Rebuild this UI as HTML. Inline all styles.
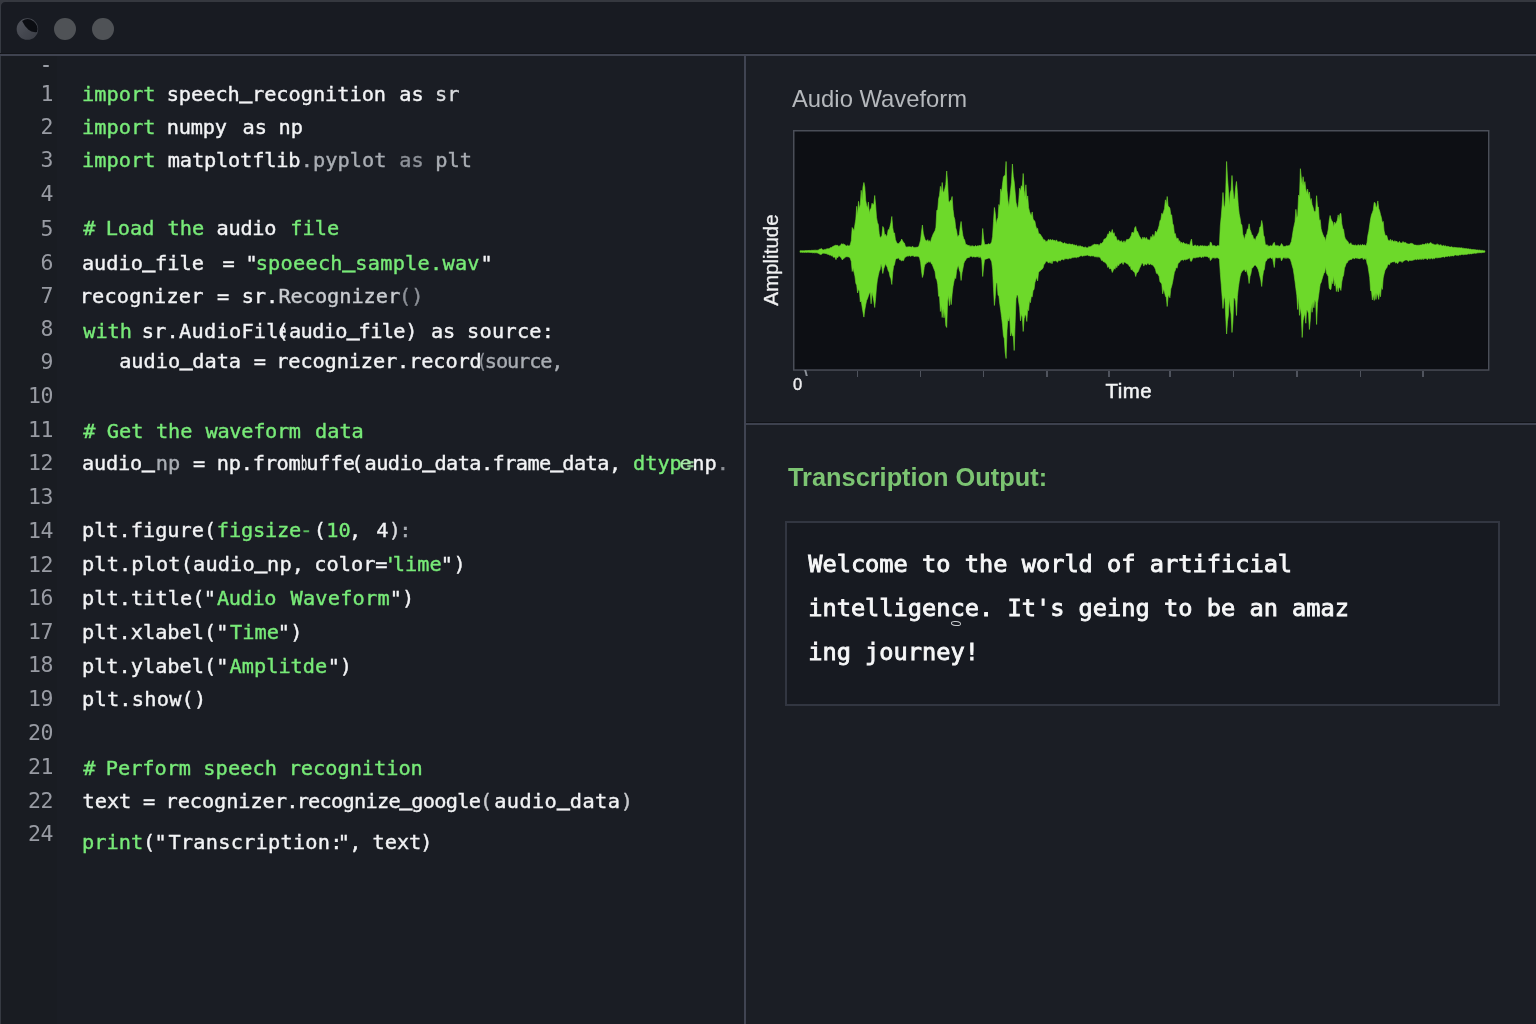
<!DOCTYPE html>
<html lang="en"><head><meta charset="utf-8"><title>Speech Recognition</title>
<style>
html,body{margin:0;padding:0}
body{width:1536px;height:1024px;overflow:hidden;background:#1a1d24;position:relative;font-family:"DejaVu Sans Mono","Liberation Mono",monospace}
.abs{position:absolute}
.row{position:absolute;left:0;width:744px;height:30px;font-size:20.3px;line-height:30px;white-space:pre;color:#f2f3f5;-webkit-text-stroke:0.4px currentColor}
.row span{position:absolute;top:0;transform-origin:0 50%}
.row u{text-decoration:none;position:relative;top:-3.2px;-webkit-text-stroke:1.4px currentColor}
.ln{position:absolute;white-space:pre;font-size:21.5px;line-height:30px;height:30px;color:#989ba3;text-align:right;width:40px;left:12.8px;letter-spacing:-0.6px}
.dot{position:absolute;width:21.8px;height:21.8px;border-radius:50%;background:#4f5256;top:17.8px}
.sans{font-family:"Liberation Sans","DejaVu Sans",sans-serif}
</style></head><body><div id="app" style="position:absolute;left:0;top:0;width:1536px;height:1024px;will-change:transform">

<div class="abs" style="left:0;top:0;width:1536px;height:56px;background:#181b22"></div>
<div class="abs" style="left:746px;top:56px;width:790px;height:968px;background:#1b1e25"></div>
<div class="abs" style="left:1px;top:56px;width:56px;height:968px;background:#191c22"></div>
<div class="abs" style="left:0;top:0;width:1536px;height:2px;background:#35383f"></div>
<div class="abs" style="left:0;top:0;width:1px;height:1024px;background:#363a42"></div>
<svg class="abs" style="left:0;top:0" width="8" height="8" viewBox="0 0 8 8"><path d="M0 0H8V2H5.2A4.2 4.2 0 0 0 1 6.2V8H0Z" fill="#363940"/></svg>
<div class="abs" style="left:0;top:53px;width:1536px;height:1px;background:#13151a"></div>
<div class="abs" style="left:0;top:54px;width:1536px;height:2px;background:#3f4350"></div>
<div class="abs" style="left:744px;top:56px;width:2px;height:968px;background:#404452"></div>
<div class="abs" style="left:746px;top:422px;width:790px;height:1px;background:#111318"></div>
<div class="abs" style="left:746px;top:423px;width:790px;height:2px;background:#3d414e"></div>
<div class="dot" style="left:54.1px"></div>
<div class="dot" style="left:92.19999999999999px"></div>
<svg class="abs" style="left:10px;top:10px" width="40" height="40" viewBox="0 0 40 40"><defs><linearGradient id="g1" x1="0" y1="0" x2="1" y2="1"><stop offset="0.2" stop-color="#4d5058"/><stop offset="0.8" stop-color="#3e4149"/></linearGradient></defs><circle cx="17.4" cy="19.1" r="10.75" fill="url(#g1)"/><path d="M12.1 10.9A9.9 9.9 0 0 1 26.95 22.1Q21.5 22.6 18.5 19.8Q14.5 16 12.1 10.9Z" fill="#0b0d12"/></svg>
<div class="abs" style="left:43px;top:64.8px;width:6px;height:2.2px;background:#9a9ea6;border-radius:1px"></div>
<div class="row" style="top:79px"><span style="left:82.07px;color:#78ea78;letter-spacing:0.013px;">import</span> <span style="left:166.67px;color:#f2f3f5;letter-spacing:-0.023px;">speech<u>_</u>recognition</span> <span style="left:399.18px;color:#f2f3f5;">as</span> <span style="left:435.07px;color:#d9dbde;">sr</span></div>
<div class="row" style="top:112px"><span style="left:82.07px;color:#78ea78;letter-spacing:0.013px;">import</span> <span style="left:166.87px;color:#f2f3f5;letter-spacing:-0.257px;">numpy</span> <span style="left:242.48px;color:#f2f3f5;">as</span> <span style="left:278.57px;color:#f2f3f5;">np</span></div>
<div class="row" style="top:145px"><span style="left:82.07px;color:#78ea78;letter-spacing:0.013px;">import</span> <span style="left:167.79px;color:#f2f3f5;letter-spacing:-0.156px;">matplotflib</span><span style="left:300.73px;color:#a9adb3;letter-spacing:0.032px;">.pyplot</span> <span style="left:399.18px;color:#8d9198;">as</span> <span style="left:435.37px;color:#a9adb3;">plt</span></div>
<div class="row" style="top:213px"><span style="left:83.20px;color:#78ea78;">#</span> <span style="left:105.67px;color:#78ea78;">Load</span> <span style="left:167.48px;color:#78ea78;">the</span> <span style="left:216.48px;color:#f2f3f5;letter-spacing:-0.257px;">audio</span> <span style="left:290.27px;color:#78ea78;">file</span></div>
<div class="row" style="top:248px"><span style="left:81.88px;color:#f2f3f5;letter-spacing:-0.015px;">audio<u>_</u>file</span> <span style="left:222.39px;color:#f2f3f5;">=</span> <span style="left:245.45px;color:#f2f3f5;">"</span><span style="left:255.67px;color:#78ea78;letter-spacing:0.241px;">spoeech<u>_</u>sample.wav</span><span style="left:480.45px;color:#f2f3f5;">"</span></div>
<div class="row" style="top:281px"><span style="left:79.65px;color:#f2f3f5;letter-spacing:0.188px;">recognizer</span> <span style="left:216.99px;color:#f2f3f5;">=</span> <span style="left:241.67px;color:#f2f3f5;">sr.</span><span style="left:278.38px;color:#c9ccd0;letter-spacing:-0.038px;">Recognizer</span><span style="left:399.04px;color:#8d9198;">()</span></div>
<div class="row" style="top:316px"><span style="left:83.20px;color:#78ea78;">with</span> <span style="left:141.67px;color:#f2f3f5;letter-spacing:0.256px;">sr.AudioFil</span><span style="left:279.17px;color:#f2f3f5;transform:scaleX(0.6);">e</span><span style="left:276.54px;color:#f2f3f5;">(</span><span style="left:288.98px;color:#f2f3f5;letter-spacing:-0.615px;">audio<u>_</u>file</span><span style="left:405.35px;color:#f2f3f5;">)</span> <span style="left:430.88px;color:#f2f3f5;">as</span> <span style="left:467.07px;color:#f2f3f5;letter-spacing:0.249px;">source:</span></div>
<div class="row" style="top:346px">   <span style="left:119.18px;color:#f2f3f5;letter-spacing:-0.026px;">audio<u>_</u>data</span> <span style="left:253.69px;color:#f2f3f5;">=</span> <span style="left:276.25px;color:#f2f3f5;letter-spacing:-0.128px;">recognizer.record</span><span style="left:476.67px;color:#8d9198;transform:scaleX(0.8);">(</span><span style="left:484.87px;color:#a9adb3;letter-spacing:-1.135px;">source,</span></div>
<div class="row" style="top:416px"><span style="left:83.20px;color:#78ea78;">#</span> <span style="left:106.78px;color:#78ea78;">Get</span> <span style="left:155.88px;color:#78ea78;">the</span> <span style="left:205.50px;color:#78ea78;letter-spacing:-0.303px;">waveform</span> <span style="left:314.98px;color:#78ea78;">data</span></div>
<div class="row" style="top:448px"><span style="left:81.88px;color:#f2f3f5;letter-spacing:-0.154px;">audio<u>_</u></span><span style="left:155.87px;color:#a9adb3;">np</span> <span style="left:192.99px;color:#f2f3f5;">=</span> <span style="left:216.87px;color:#f2f3f5;letter-spacing:-0.261px;">np.from</span><span style="left:300.54px;color:#f2f3f5;transform:scaleX(0.5);">b</span><span style="left:306.17px;color:#f2f3f5;">uffe</span><span style="left:351.24px;color:#f2f3f5;">(</span><span style="left:364.58px;color:#f2f3f5;letter-spacing:-0.578px;">audio<u>_</u>data.frame<u>_</u>data</span><span style="left:609.04px;color:#f2f3f5;">,</span> <span style="left:632.98px;color:#78ea78;">dtyp</span><span style="left:679.58px;color:#a8eaa8;transform:scaleX(1.0);-webkit-text-stroke:0.2px">e</span><span style="left:686.55px;color:#a8eaa8;transform:scaleX(0.55);opacity:.8">=</span><span style="left:692.37px;color:#f2f3f5;">np</span><span style="left:716.63px;color:#8d9198;">.</span></div>
<div class="row" style="top:515px"><span style="left:81.97px;color:#f2f3f5;letter-spacing:-0.012px;">plt.figure(</span><span style="left:216.87px;color:#78ea78;letter-spacing:-0.177px;">figsize</span><span style="left:300.25px;color:#58b85c;">-</span><span style="left:313.64px;color:#f2f3f5;">(</span><span style="left:326.36px;color:#78ea78;">10</span><span style="left:349.04px;color:#f2f3f5;">,</span> <span style="left:376.19px;color:#f2f3f5;">4</span><span style="left:388.75px;color:#d9dbde;">)</span><span style="left:399.33px;color:#a9adb3;">:</span></div>
<div class="row" style="top:549px"><span style="left:81.97px;color:#f2f3f5;letter-spacing:0.132px;">plt.plot(audio<u>_</u>np,</span> <span style="left:314.37px;color:#f2f3f5;letter-spacing:-0.010px;">color=</span><span style="left:384.32px;color:#78ea78;">'</span><span style="left:392.78px;color:#78ea78;">lime</span><span style="left:440.75px;color:#f2f3f5;">"</span><span style="left:453.55px;color:#f2f3f5;">)</span></div>
<div class="row" style="top:583px"><span style="left:81.97px;color:#f2f3f5;letter-spacing:0.056px;">plt.title(</span><span style="left:203.85px;color:#f2f3f5;">"</span><span style="left:216.90px;color:#78ea78;letter-spacing:-0.361px;">Audio</span> <span style="left:290.50px;color:#78ea78;letter-spacing:0.212px;">Waveform</span><span style="left:389.85px;color:#f2f3f5;">"</span><span style="left:402.05px;color:#f2f3f5;">)</span></div>
<div class="row" style="top:617px"><span style="left:81.97px;color:#f2f3f5;letter-spacing:-0.012px;">plt.xlabel(</span><span style="left:216.15px;color:#f2f3f5;">"</span><span style="left:230.09px;color:#78ea78;">Time</span><span style="left:277.85px;color:#f2f3f5;">"</span><span style="left:290.35px;color:#f2f3f5;">)</span></div>
<div class="row" style="top:651px"><span style="left:81.97px;color:#f2f3f5;letter-spacing:-0.012px;">plt.ylabel(</span><span style="left:216.15px;color:#f2f3f5;">"</span><span style="left:229.50px;color:#78ea78;letter-spacing:0.013px;">Amplitde</span><span style="left:327.85px;color:#f2f3f5;">"</span><span style="left:339.75px;color:#f2f3f5;">)</span></div>
<div class="row" style="top:684px"><span style="left:81.97px;color:#f2f3f5;letter-spacing:0.246px;">plt.show()</span></div>
<div class="row" style="top:753px"><span style="left:83.20px;color:#78ea78;">#</span> <span style="left:105.87px;color:#78ea78;letter-spacing:-0.045px;">Perform</span> <span style="left:203.37px;color:#78ea78;letter-spacing:0.054px;">speech</span> <span style="left:288.65px;color:#78ea78;letter-spacing:-0.012px;">recognition</span></div>
<div class="row" style="top:786px"><span style="left:82.48px;color:#f2f3f5;">text</span> <span style="left:142.99px;color:#f2f3f5;">=</span> <span style="left:165.55px;color:#f2f3f5;letter-spacing:-0.090px;">recognizer</span><span style="left:286.33px;color:#f2f3f5;">.</span><span style="left:296.65px;color:#f2f3f5;letter-spacing:-0.742px;">recognize<u>_</u>google</span><span style="left:480.04px;color:#c8cacd;">(</span><span style="left:494.18px;color:#f2f3f5;letter-spacing:0.397px;">audio<u>_</u>data</span><span style="left:620.65px;color:#c8cacd;">)</span></div>
<div class="row" style="top:827px"><span style="left:81.97px;color:#78ea78;letter-spacing:0.022px;">print</span><span style="left:143.04px;color:#f2f3f5;">(</span><span style="left:154.45px;color:#f2f3f5;">"</span><span style="left:168.39px;color:#f2f3f5;letter-spacing:0.240px;">Transcription:</span><span style="left:337.85px;color:#f2f3f5;">"</span><span style="left:349.24px;color:#f2f3f5;">,</span> <span style="left:372.48px;color:#f2f3f5;">text</span><span style="left:420.35px;color:#f2f3f5;">)</span></div>
<div class="ln" style="top:79px">1</div>
<div class="ln" style="top:112px">2</div>
<div class="ln" style="top:145px">3</div>
<div class="ln" style="top:179px">4</div>
<div class="ln" style="top:214px">5</div>
<div class="ln" style="top:248px">6</div>
<div class="ln" style="top:281px">7</div>
<div class="ln" style="top:314px">8</div>
<div class="ln" style="top:347px">9</div>
<div class="ln" style="top:381px">10</div>
<div class="ln" style="top:415px">11</div>
<div class="ln" style="top:448px">12</div>
<div class="ln" style="top:482px">13</div>
<div class="ln" style="top:516px">14</div>
<div class="ln" style="top:550px">12</div>
<div class="ln" style="top:583px">16</div>
<div class="ln" style="top:617px">17</div>
<div class="ln" style="top:650px">18</div>
<div class="ln" style="top:684px">19</div>
<div class="ln" style="top:718px">20</div>
<div class="ln" style="top:752px">21</div>
<div class="ln" style="top:786px">22</div>
<div class="ln" style="top:819px">24</div>
<div class="abs sans" style="left:792px;top:83px;font-size:23.8px;line-height:32px;color:#b5b8bc;white-space:pre">Audio Waveform</div>
<svg class="abs" style="left:793px;top:130px" width="696.5" height="240.8" viewBox="0 0 696.5 240.8"><rect x="0" y="0" width="696.5" height="240.8" fill="#0d0f14"/><path d="M7.00 120.78 L7.90 120.69 L8.80 120.72 L9.70 120.63 L10.60 120.71 L11.50 120.68 L12.40 120.51 L13.30 120.62 L14.20 120.61 L15.10 120.62 L16.00 120.35 L16.90 120.52 L17.80 120.52 L18.70 120.29 L19.60 120.37 L20.50 120.31 L21.40 120.21 L22.30 120.13 L23.20 120.27 L24.10 120.23 L25.00 120.24 L25.90 119.69 L26.80 119.11 L27.70 118.90 L28.60 118.59 L29.50 119.75 L30.40 119.88 L31.30 119.47 L32.20 119.41 L33.10 119.20 L34.00 118.63 L34.90 118.86 L35.80 118.65 L36.70 118.24 L37.60 117.62 L38.50 117.44 L39.40 116.72 L40.30 116.28 L41.20 115.87 L42.10 115.44 L43.00 115.11 L43.90 115.62 L44.80 115.22 L45.70 116.86 L46.60 115.69 L47.50 115.60 L48.40 113.79 L49.30 114.18 L50.20 113.84 L51.10 114.64 L52.00 114.59 L52.90 115.97 L53.80 115.88 L54.70 115.21 L55.60 115.92 L56.50 115.90 L57.40 114.16 L58.30 110.56 L59.20 97.50 L60.10 99.06 L61.00 100.65 L61.90 94.72 L62.80 89.05 L63.70 76.31 L64.60 85.58 L65.50 71.33 L66.40 78.76 L67.30 74.61 L68.20 60.33 L69.10 70.18 L70.00 56.83 L70.90 52.50 L71.80 57.11 L72.70 70.35 L73.60 75.28 L74.50 78.28 L75.40 72.06 L76.30 83.50 L77.20 79.19 L78.10 78.36 L79.00 73.16 L79.90 74.40 L80.80 74.53 L81.70 65.50 L82.60 74.71 L83.50 87.20 L84.40 92.44 L85.30 94.52 L86.20 103.75 L87.10 107.66 L88.00 106.99 L88.90 105.58 L89.80 96.50 L90.70 98.18 L91.60 105.32 L92.50 104.30 L93.40 107.00 L94.30 104.69 L95.20 99.70 L96.10 99.64 L97.00 96.45 L97.90 92.65 L98.80 86.50 L99.70 97.41 L100.60 103.05 L101.50 102.89 L102.40 109.49 L103.30 111.86 L104.20 113.45 L105.10 113.55 L106.00 113.82 L106.90 111.88 L107.80 111.34 L108.70 109.04 L109.60 111.04 L110.50 112.30 L111.40 113.09 L112.30 115.89 L113.20 117.02 L114.10 117.36 L115.00 116.59 L115.90 117.10 L116.80 116.64 L117.70 117.03 L118.60 117.16 L119.50 116.24 L120.40 117.22 L121.30 117.39 L122.20 117.41 L123.10 117.29 L124.00 117.24 L124.90 117.07 L125.80 116.34 L126.70 113.29 L127.60 110.00 L128.50 102.00 L129.40 95.00 L130.30 103.23 L131.20 106.72 L132.10 109.59 L133.00 110.53 L133.90 111.18 L134.80 109.61 L135.70 112.07 L136.60 110.57 L137.50 112.56 L138.40 108.53 L139.30 106.33 L140.20 103.90 L141.10 102.34 L142.00 100.76 L142.90 97.34 L143.80 80.35 L144.70 80.08 L145.60 68.84 L146.50 65.19 L147.40 56.35 L148.30 62.74 L149.20 52.50 L150.10 62.17 L151.00 61.80 L151.90 58.57 L152.80 54.51 L153.70 41.00 L154.60 52.79 L155.50 70.79 L156.40 72.85 L157.30 70.30 L158.20 70.49 L159.10 66.50 L160.00 79.29 L160.90 86.49 L161.80 89.48 L162.70 97.85 L163.60 100.75 L164.50 106.86 L165.40 106.06 L166.30 104.66 L167.20 96.78 L168.10 91.50 L169.00 99.72 L169.90 105.68 L170.80 108.82 L171.70 110.03 L172.60 114.33 L173.50 114.46 L174.40 115.04 L175.30 115.61 L176.20 115.31 L177.10 116.65 L178.00 115.62 L178.90 116.57 L179.80 115.62 L180.70 116.51 L181.60 116.52 L182.50 115.41 L183.40 116.54 L184.30 115.72 L185.20 116.32 L186.10 115.15 L187.00 116.00 L187.90 115.46 L188.80 114.13 L189.70 98.50 L190.60 108.36 L191.50 114.25 L192.40 114.50 L193.30 114.52 L194.20 114.57 L195.10 113.66 L196.00 114.07 L196.90 114.37 L197.80 113.51 L198.70 111.67 L199.60 106.36 L200.50 91.49 L201.40 77.50 L202.30 83.50 L203.20 94.56 L204.10 89.82 L205.00 87.75 L205.90 74.55 L206.80 77.29 L207.70 58.95 L208.60 62.87 L209.50 54.30 L210.40 47.12 L211.30 45.69 L212.20 45.27 L213.10 31.50 L214.00 60.54 L214.90 70.17 L215.80 76.80 L216.70 68.74 L217.60 60.27 L218.50 52.17 L219.40 34.00 L220.30 46.21 L221.20 51.86 L222.10 61.99 L223.00 72.35 L223.90 76.52 L224.80 78.71 L225.70 71.26 L226.60 58.28 L227.50 61.23 L228.40 55.74 L229.30 57.12 L230.20 43.50 L231.10 60.15 L232.00 67.10 L232.90 54.79 L233.80 70.01 L234.70 65.92 L235.60 77.66 L236.50 81.43 L237.40 83.88 L238.30 85.67 L239.20 81.95 L240.10 89.11 L241.00 90.38 L241.90 91.24 L242.80 96.03 L243.70 98.97 L244.60 98.27 L245.50 103.25 L246.40 103.74 L247.30 104.31 L248.20 105.80 L249.10 107.07 L250.00 108.78 L250.90 110.37 L251.80 109.69 L252.70 111.68 L253.60 111.22 L254.50 111.28 L255.40 109.36 L256.30 110.53 L257.20 109.29 L258.10 110.30 L259.00 110.19 L259.90 109.55 L260.80 110.98 L261.70 109.97 L262.60 111.53 L263.50 109.85 L264.40 111.73 L265.30 111.79 L266.20 112.10 L267.10 111.25 L268.00 112.28 L268.90 112.30 L269.80 113.26 L270.70 113.62 L271.60 112.58 L272.50 113.77 L273.40 113.66 L274.30 114.11 L275.20 114.24 L276.10 113.71 L277.00 114.29 L277.90 114.31 L278.80 114.55 L279.70 114.09 L280.60 115.24 L281.50 114.74 L282.40 115.64 L283.30 114.86 L284.20 116.25 L285.10 116.52 L286.00 115.57 L286.90 116.52 L287.80 115.80 L288.70 116.89 L289.60 116.57 L290.50 117.33 L291.40 117.44 L292.30 116.73 L293.20 117.68 L294.10 117.97 L295.00 117.66 L295.90 116.37 L296.80 117.01 L297.70 116.44 L298.60 115.89 L299.50 115.15 L300.40 115.12 L301.30 114.07 L302.20 114.68 L303.10 114.09 L304.00 115.17 L304.90 114.09 L305.80 115.48 L306.70 114.91 L307.60 113.22 L308.50 113.55 L309.40 112.73 L310.30 111.61 L311.20 108.96 L312.10 109.13 L313.00 107.89 L313.90 107.08 L314.80 103.89 L315.70 104.54 L316.60 101.12 L317.50 102.64 L318.40 102.59 L319.30 99.50 L320.20 104.34 L321.10 102.63 L322.00 107.07 L322.90 106.23 L323.80 109.21 L324.70 110.70 L325.60 109.81 L326.50 111.22 L327.40 111.47 L328.30 110.58 L329.20 112.24 L330.10 112.47 L331.00 110.70 L331.90 112.79 L332.80 111.37 L333.70 109.39 L334.60 109.55 L335.50 109.34 L336.40 108.90 L337.30 107.35 L338.20 105.69 L339.10 102.05 L340.00 102.99 L340.90 102.65 L341.80 97.70 L342.70 96.50 L343.60 100.92 L344.50 101.49 L345.40 103.77 L346.30 106.09 L347.20 107.32 L348.10 108.77 L349.00 109.84 L349.90 106.97 L350.80 109.33 L351.70 107.21 L352.60 109.49 L353.50 107.44 L354.40 109.80 L355.30 109.67 L356.20 110.16 L357.10 109.70 L358.00 106.37 L358.90 108.14 L359.80 104.40 L360.70 106.38 L361.60 105.95 L362.50 100.98 L363.40 102.91 L364.30 101.04 L365.20 98.70 L366.10 95.64 L367.00 90.78 L367.90 89.44 L368.80 83.34 L369.70 84.70 L370.60 81.46 L371.50 78.70 L372.40 69.84 L373.30 75.10 L374.20 66.50 L375.10 76.26 L376.00 76.75 L376.90 78.33 L377.80 84.52 L378.70 85.01 L379.60 93.34 L380.50 95.47 L381.40 103.66 L382.30 103.59 L383.20 107.92 L384.10 108.63 L385.00 108.05 L385.90 111.47 L386.80 110.75 L387.70 113.47 L388.60 112.12 L389.50 113.70 L390.40 112.26 L391.30 113.49 L392.20 113.79 L393.10 114.13 L394.00 113.59 L394.90 114.92 L395.80 114.28 L396.70 115.27 L397.60 111.66 L398.50 109.06 L399.40 115.73 L400.30 116.06 L401.20 115.95 L402.10 114.81 L403.00 115.91 L403.90 116.16 L404.80 115.31 L405.70 116.38 L406.60 116.15 L407.50 115.50 L408.40 115.95 L409.30 115.49 L410.20 116.27 L411.10 115.72 L412.00 116.19 L412.90 116.08 L413.80 116.27 L414.70 116.25 L415.60 115.59 L416.50 116.27 L417.40 111.91 L418.30 112.83 L419.20 115.81 L420.10 116.05 L421.00 115.23 L421.90 115.99 L422.80 116.23 L423.70 116.29 L424.60 115.50 L425.50 115.78 L426.40 115.20 L427.30 96.05 L428.20 86.80 L429.10 75.67 L430.00 62.50 L430.90 75.20 L431.80 78.02 L432.70 62.79 L433.60 31.50 L434.50 47.97 L435.40 60.01 L436.30 75.31 L437.20 62.77 L438.10 60.01 L439.00 45.50 L439.90 59.23 L440.80 68.92 L441.70 69.02 L442.60 57.40 L443.50 51.50 L444.40 62.53 L445.30 75.79 L446.20 83.84 L447.10 88.15 L448.00 93.97 L448.90 94.90 L449.80 104.16 L450.70 106.64 L451.60 109.68 L452.50 104.14 L453.40 104.15 L454.30 99.17 L455.20 98.92 L456.10 93.80 L457.00 99.52 L457.90 101.66 L458.80 104.95 L459.70 105.20 L460.60 108.95 L461.50 108.68 L462.40 110.62 L463.30 106.73 L464.20 105.96 L465.10 103.86 L466.00 102.22 L466.90 97.08 L467.80 96.66 L468.70 90.50 L469.60 94.93 L470.50 105.08 L471.40 106.95 L472.30 114.33 L473.20 115.26 L474.10 114.54 L475.00 116.42 L475.90 115.72 L476.80 116.20 L477.70 115.38 L478.60 116.05 L479.50 115.55 L480.40 113.30 L481.30 112.31 L482.20 116.08 L483.10 115.32 L484.00 116.19 L484.90 115.30 L485.80 116.15 L486.70 116.32 L487.60 115.62 L488.50 113.54 L489.40 114.85 L490.30 116.38 L491.20 116.54 L492.10 116.24 L493.00 116.27 L493.90 115.56 L494.80 116.09 L495.70 115.61 L496.60 115.60 L497.50 113.56 L498.40 111.41 L499.30 106.24 L500.20 100.35 L501.10 95.69 L502.00 91.83 L502.90 79.37 L503.80 88.06 L504.70 85.19 L505.60 65.14 L506.50 66.70 L507.40 38.70 L508.30 47.59 L509.20 55.35 L510.10 46.75 L511.00 55.77 L511.90 51.64 L512.80 58.98 L513.70 63.56 L514.60 59.11 L515.50 65.52 L516.40 61.99 L517.30 71.52 L518.20 68.48 L519.10 74.65 L520.00 77.10 L520.90 80.60 L521.80 82.32 L522.70 80.81 L523.60 65.70 L524.50 76.43 L525.40 77.12 L526.30 90.45 L527.20 89.69 L528.10 98.67 L529.00 102.00 L529.90 104.41 L530.80 106.52 L531.70 107.44 L532.60 111.60 L533.50 105.83 L534.40 103.69 L535.30 99.06 L536.20 90.62 L537.10 85.50 L538.00 88.97 L538.90 91.02 L539.80 91.88 L540.70 97.07 L541.60 92.09 L542.50 94.36 L543.40 92.20 L544.30 90.31 L545.20 84.88 L546.10 89.74 L547.00 83.72 L547.90 83.50 L548.80 93.83 L549.70 98.25 L550.60 99.52 L551.50 106.04 L552.40 108.81 L553.30 110.03 L554.20 110.66 L555.10 112.01 L556.00 113.73 L556.90 114.36 L557.80 112.74 L558.70 114.78 L559.60 115.01 L560.50 115.12 L561.40 115.54 L562.30 114.68 L563.20 115.69 L564.10 115.69 L565.00 114.53 L565.90 115.30 L566.80 115.39 L567.70 114.65 L568.60 115.68 L569.50 114.30 L570.40 115.35 L571.30 114.78 L572.20 115.51 L573.10 115.48 L574.00 112.83 L574.90 105.25 L575.80 101.19 L576.70 94.85 L577.60 88.86 L578.50 84.77 L579.40 82.53 L580.30 80.01 L581.20 72.50 L582.10 72.76 L583.00 77.22 L583.90 76.93 L584.80 70.95 L585.70 78.31 L586.60 80.75 L587.50 84.46 L588.40 87.54 L589.30 92.73 L590.20 91.42 L591.10 101.00 L592.00 104.54 L592.90 105.71 L593.80 105.60 L594.70 109.30 L595.60 110.46 L596.50 111.04 L597.40 109.29 L598.30 111.67 L599.20 109.82 L600.10 111.47 L601.00 111.64 L601.90 110.60 L602.80 112.00 L603.70 111.00 L604.60 112.62 L605.50 112.75 L606.40 111.30 L607.30 112.89 L608.20 113.11 L609.10 112.88 L610.00 111.50 L610.90 112.49 L611.80 112.70 L612.70 112.49 L613.60 113.39 L614.50 113.86 L615.40 114.00 L616.30 114.04 L617.20 113.83 L618.10 112.90 L619.00 114.13 L619.90 113.49 L620.80 114.94 L621.70 114.98 L622.60 115.08 L623.50 115.28 L624.40 115.29 L625.30 115.21 L626.20 115.26 L627.10 115.06 L628.00 114.89 L628.90 115.02 L629.80 113.96 L630.70 114.58 L631.60 114.56 L632.50 113.57 L633.40 114.46 L634.30 112.88 L635.20 114.18 L636.10 113.49 L637.00 113.24 L637.90 112.43 L638.80 113.71 L639.70 114.10 L640.60 114.19 L641.50 114.73 L642.40 114.87 L643.30 114.92 L644.20 113.70 L645.10 115.17 L646.00 114.56 L646.90 115.50 L647.80 114.43 L648.70 115.63 L649.60 115.95 L650.50 115.24 L651.40 116.22 L652.30 115.48 L653.20 116.39 L654.10 116.48 L655.00 116.15 L655.90 116.80 L656.80 116.99 L657.70 117.08 L658.60 116.70 L659.50 117.29 L660.40 117.38 L661.30 117.36 L662.20 117.50 L663.10 117.58 L664.00 117.69 L664.90 117.81 L665.80 117.81 L666.70 117.80 L667.60 117.97 L668.50 117.75 L669.40 118.20 L670.30 118.13 L671.20 118.52 L672.10 118.41 L673.00 118.80 L673.90 118.56 L674.80 119.12 L675.70 118.78 L676.60 119.23 L677.50 119.10 L678.40 119.41 L679.30 119.58 L680.20 119.38 L681.10 119.83 L682.00 119.61 L682.90 119.91 L683.80 120.01 L684.70 119.89 L685.60 120.22 L686.50 120.02 L687.40 120.33 L688.30 120.42 L689.20 120.29 L690.10 120.69 L691.00 120.80 L691.90 120.80 L691.90 122.20 L691.00 122.30 L690.10 122.38 L689.20 122.47 L688.30 122.79 L687.40 122.63 L686.50 122.71 L685.60 122.80 L684.70 122.87 L683.80 122.97 L682.90 123.38 L682.00 123.09 L681.10 123.23 L680.20 123.38 L679.30 123.50 L678.40 123.91 L677.50 123.66 L676.60 124.02 L675.70 123.83 L674.80 124.03 L673.90 124.51 L673.00 124.23 L672.10 124.42 L671.20 124.42 L670.30 124.84 L669.40 124.52 L668.50 124.45 L667.60 125.03 L666.70 124.73 L665.80 125.51 L664.90 124.89 L664.00 125.71 L663.10 124.89 L662.20 125.00 L661.30 125.18 L660.40 126.15 L659.50 125.63 L658.60 125.92 L657.70 125.83 L656.80 126.62 L655.90 125.99 L655.00 126.04 L654.10 126.80 L653.20 126.29 L652.30 126.50 L651.40 127.46 L650.50 126.66 L649.60 126.88 L648.70 127.02 L647.80 127.65 L646.90 127.12 L646.00 128.13 L645.10 126.98 L644.20 128.27 L643.30 127.62 L642.40 127.75 L641.50 128.78 L640.60 127.91 L639.70 129.24 L638.80 128.03 L637.90 128.28 L637.00 129.31 L636.10 128.26 L635.20 128.20 L634.30 129.81 L633.40 128.43 L632.50 128.53 L631.60 128.43 L630.70 129.59 L629.80 128.02 L628.90 129.72 L628.00 128.39 L627.10 129.66 L626.20 128.84 L625.30 129.73 L624.40 128.75 L623.50 130.12 L622.60 128.98 L621.70 129.63 L620.80 129.75 L619.90 130.47 L619.00 130.05 L618.10 130.85 L617.20 130.32 L616.30 130.37 L615.40 131.41 L614.50 130.17 L613.60 130.03 L612.70 130.01 L611.80 130.36 L610.90 130.95 L610.00 131.25 L609.10 132.55 L608.20 131.25 L607.30 131.22 L606.40 131.23 L605.50 131.97 L604.60 133.64 L603.70 132.03 L602.80 133.28 L601.90 131.60 L601.00 131.84 L600.10 131.89 L599.20 131.91 L598.30 132.52 L597.40 132.38 L596.50 134.81 L595.60 134.28 L594.70 135.07 L593.80 137.78 L592.90 138.78 L592.00 140.43 L591.10 143.94 L590.20 148.02 L589.30 159.42 L588.40 156.58 L587.50 166.76 L586.60 162.12 L585.70 169.41 L584.80 165.62 L583.90 163.21 L583.00 169.51 L582.10 163.32 L581.20 170.50 L580.30 164.81 L579.40 169.92 L578.50 161.06 L577.60 160.67 L576.70 147.29 L575.80 141.77 L574.90 135.80 L574.00 133.41 L573.10 128.01 L572.20 129.52 L571.30 127.92 L570.40 129.60 L569.50 127.68 L568.60 127.96 L567.70 127.98 L566.80 128.92 L565.90 128.15 L565.00 128.84 L564.10 127.70 L563.20 128.34 L562.30 127.65 L561.40 129.11 L560.50 128.10 L559.60 128.06 L558.70 129.49 L557.80 129.19 L556.90 130.14 L556.00 129.69 L555.10 131.01 L554.20 132.87 L553.30 133.04 L552.40 135.90 L551.50 138.09 L550.60 145.13 L549.70 147.24 L548.80 151.99 L547.90 160.50 L547.00 157.76 L546.10 157.16 L545.20 161.89 L544.30 156.18 L543.40 161.50 L542.50 152.58 L541.60 155.79 L540.70 145.91 L539.80 153.80 L538.90 150.71 L538.00 159.28 L537.10 159.50 L536.20 157.97 L535.30 146.51 L534.40 144.85 L533.50 143.32 L532.60 136.62 L531.70 142.44 L530.80 143.41 L529.90 146.23 L529.00 149.37 L528.10 152.48 L527.20 154.10 L526.30 160.48 L525.40 167.13 L524.50 173.43 L523.60 194.50 L522.70 172.19 L521.80 169.79 L520.90 177.77 L520.00 171.66 L519.10 182.28 L518.20 173.78 L517.30 189.76 L516.40 199.50 L515.50 183.78 L514.60 180.73 L513.70 180.01 L512.80 193.28 L511.90 183.14 L511.00 186.46 L510.10 190.83 L509.20 207.50 L508.30 184.97 L507.40 177.31 L506.50 185.39 L505.60 165.80 L504.70 179.50 L503.80 165.17 L502.90 158.71 L502.00 151.41 L501.10 144.87 L500.20 139.06 L499.30 135.97 L498.40 132.60 L497.50 129.80 L496.60 128.49 L495.70 128.35 L494.80 127.14 L493.90 128.61 L493.00 127.36 L492.10 128.62 L491.20 127.57 L490.30 127.59 L489.40 129.03 L488.50 130.90 L487.60 127.48 L486.70 127.75 L485.80 127.78 L484.90 128.11 L484.00 127.79 L483.10 127.71 L482.20 127.84 L481.30 137.50 L480.40 132.49 L479.50 127.48 L478.60 128.78 L477.70 127.57 L476.80 127.69 L475.90 128.63 L475.00 127.79 L474.10 129.51 L473.20 131.03 L472.30 131.91 L471.40 139.20 L470.50 141.21 L469.60 146.90 L468.70 156.50 L467.80 150.03 L466.90 146.39 L466.00 142.20 L465.10 139.23 L464.20 137.44 L463.30 136.17 L462.40 135.07 L461.50 135.15 L460.60 136.41 L459.70 137.87 L458.80 138.36 L457.90 143.83 L457.00 146.61 L456.10 153.50 L455.20 146.06 L454.30 143.24 L453.40 139.16 L452.50 142.00 L451.60 139.52 L450.70 139.77 L449.80 140.80 L448.90 141.43 L448.00 143.34 L447.10 146.44 L446.20 151.76 L445.30 157.88 L444.40 166.70 L443.50 185.50 L442.60 171.54 L441.70 168.08 L440.80 167.95 L439.90 191.48 L439.00 202.50 L438.10 184.62 L437.20 177.03 L436.30 167.94 L435.40 185.04 L434.50 191.66 L433.60 204.00 L432.70 186.02 L431.80 166.49 L430.90 169.15 L430.00 178.50 L429.10 166.31 L428.20 154.25 L427.30 143.37 L426.40 129.15 L425.50 128.23 L424.60 127.84 L423.70 127.83 L422.80 127.70 L421.90 128.57 L421.00 127.24 L420.10 128.31 L419.20 127.55 L418.30 129.49 L417.40 130.61 L416.50 127.00 L415.60 127.74 L414.70 126.66 L413.80 126.41 L412.90 126.41 L412.00 126.22 L411.10 126.25 L410.20 127.39 L409.30 126.29 L408.40 127.82 L407.50 126.75 L406.60 126.82 L405.70 127.15 L404.80 127.26 L403.90 127.32 L403.00 127.53 L402.10 128.07 L401.20 127.72 L400.30 127.78 L399.40 128.97 L398.50 131.27 L397.60 131.17 L396.70 127.67 L395.80 128.59 L394.90 128.87 L394.00 129.50 L393.10 129.30 L392.20 130.08 L391.30 129.21 L390.40 130.60 L389.50 129.73 L388.60 130.05 L387.70 130.24 L386.80 131.95 L385.90 132.67 L385.00 133.70 L384.10 138.19 L383.20 137.00 L382.30 140.32 L381.40 142.31 L380.50 147.18 L379.60 152.19 L378.70 156.08 L377.80 158.98 L376.90 167.75 L376.00 164.88 L375.10 166.91 L374.20 176.50 L373.30 167.58 L372.40 166.00 L371.50 162.17 L370.60 158.83 L369.70 163.85 L368.80 154.13 L367.90 152.56 L367.00 151.92 L366.10 146.33 L365.20 144.68 L364.30 143.56 L363.40 143.33 L362.50 139.53 L361.60 137.52 L360.70 136.24 L359.80 135.02 L358.90 134.73 L358.00 134.60 L357.10 133.65 L356.20 134.94 L355.30 133.32 L354.40 133.21 L353.50 135.15 L352.60 134.00 L351.70 134.10 L350.80 136.10 L349.90 133.29 L349.00 132.95 L348.10 135.02 L347.20 137.12 L346.30 138.86 L345.40 141.31 L344.50 142.44 L343.60 142.93 L342.70 146.50 L341.80 142.45 L340.90 141.70 L340.00 140.89 L339.10 139.23 L338.20 139.92 L337.30 136.31 L336.40 136.45 L335.50 134.63 L334.60 134.08 L333.70 133.58 L332.80 132.99 L331.90 132.21 L331.00 132.06 L330.10 134.51 L329.20 132.54 L328.30 132.82 L327.40 133.64 L326.50 133.71 L325.60 135.80 L324.70 134.40 L323.80 137.75 L322.90 135.74 L322.00 139.31 L321.10 137.94 L320.20 140.38 L319.30 142.50 L318.40 139.56 L317.50 138.40 L316.60 138.91 L315.70 136.00 L314.80 137.50 L313.90 134.20 L313.00 133.56 L312.10 132.60 L311.20 131.76 L310.30 131.69 L309.40 130.01 L308.50 130.43 L307.60 128.12 L306.70 127.46 L305.80 126.57 L304.90 127.45 L304.00 126.31 L303.10 127.28 L302.20 126.17 L301.30 126.72 L300.40 125.87 L299.50 126.00 L298.60 125.83 L297.70 126.20 L296.80 125.73 L295.90 125.92 L295.00 125.23 L294.10 124.99 L293.20 125.50 L292.30 125.51 L291.40 125.76 L290.50 125.76 L289.60 126.32 L288.70 125.83 L287.80 125.75 L286.90 126.21 L286.00 126.67 L285.10 127.30 L284.20 126.94 L283.30 127.79 L282.40 127.17 L281.50 127.35 L280.60 127.62 L279.70 127.62 L278.80 127.83 L277.90 128.58 L277.00 128.13 L276.10 128.16 L275.20 129.28 L274.30 128.75 L273.40 128.67 L272.50 128.83 L271.60 128.70 L270.70 130.22 L269.80 129.24 L268.90 129.41 L268.00 129.78 L267.10 131.15 L266.20 130.24 L265.30 130.75 L264.40 132.35 L263.50 131.07 L262.60 130.86 L261.70 130.97 L260.80 131.00 L259.90 130.81 L259.00 133.77 L258.10 131.35 L257.20 133.28 L256.30 131.71 L255.40 133.12 L254.50 131.49 L253.60 131.24 L252.70 131.72 L251.80 133.77 L250.90 134.60 L250.00 138.17 L249.10 138.98 L248.20 140.04 L247.30 140.86 L246.40 141.36 L245.50 142.75 L244.60 150.90 L243.70 147.23 L242.80 149.73 L241.90 152.75 L241.00 159.64 L240.10 160.34 L239.20 166.94 L238.30 166.14 L237.40 172.69 L236.50 170.54 L235.60 180.62 L234.70 179.33 L233.80 191.50 L232.90 184.81 L232.00 185.35 L231.10 188.74 L230.20 201.50 L229.30 186.97 L228.40 184.36 L227.50 190.89 L226.60 177.81 L225.70 171.97 L224.80 165.05 L223.90 164.91 L223.00 168.84 L222.10 193.68 L221.20 220.50 L220.30 205.84 L219.40 205.97 L218.50 201.50 L217.60 206.03 L216.70 186.08 L215.80 191.07 L214.90 188.88 L214.00 200.50 L213.10 228.50 L212.20 222.42 L211.30 208.80 L210.40 205.51 L209.50 194.75 L208.60 187.36 L207.70 180.18 L206.80 174.28 L205.90 166.26 L205.00 165.04 L204.10 153.20 L203.20 152.64 L202.30 166.48 L201.40 175.50 L200.50 158.81 L199.60 139.47 L198.70 131.87 L197.80 129.96 L196.90 128.15 L196.00 128.02 L195.10 128.28 L194.20 128.64 L193.30 128.91 L192.40 129.28 L191.50 129.71 L190.60 136.86 L189.70 146.50 L188.80 130.03 L187.90 127.39 L187.00 126.53 L186.10 127.73 L185.20 126.61 L184.30 126.75 L183.40 126.81 L182.50 127.00 L181.60 126.96 L180.70 126.54 L179.80 127.21 L178.90 126.44 L178.00 126.17 L177.10 126.33 L176.20 127.70 L175.30 127.44 L174.40 127.92 L173.50 128.30 L172.60 130.33 L171.70 131.06 L170.80 133.49 L169.90 138.56 L169.00 142.81 L168.10 150.50 L167.20 142.15 L166.30 139.90 L165.40 135.47 L164.50 137.19 L163.60 140.82 L162.70 148.60 L161.80 147.65 L160.90 151.78 L160.00 156.73 L159.10 164.17 L158.20 174.66 L157.30 165.38 L156.40 175.65 L155.50 165.14 L154.60 171.97 L153.70 197.50 L152.80 195.70 L151.90 181.73 L151.00 187.82 L150.10 178.39 L149.20 187.50 L148.30 175.93 L147.40 181.51 L146.50 166.53 L145.60 166.28 L144.70 154.38 L143.80 149.66 L142.90 148.20 L142.00 141.52 L141.10 139.26 L140.20 136.98 L139.30 134.55 L138.40 133.74 L137.50 131.59 L136.60 132.35 L135.70 131.31 L134.80 132.77 L133.90 131.77 L133.00 134.08 L132.10 133.79 L131.20 137.49 L130.30 144.51 L129.40 147.50 L128.50 140.69 L127.60 132.14 L126.70 128.49 L125.80 126.36 L124.90 126.75 L124.00 125.82 L123.10 126.73 L122.20 125.91 L121.30 126.80 L120.40 125.81 L119.50 125.70 L118.60 125.73 L117.70 126.42 L116.80 125.76 L115.90 125.79 L115.00 126.44 L114.10 125.66 L113.20 126.85 L112.30 127.09 L111.40 128.28 L110.50 130.69 L109.60 130.34 L108.70 131.06 L107.80 129.79 L106.90 130.09 L106.00 128.52 L105.10 127.70 L104.20 128.74 L103.30 128.41 L102.40 129.99 L101.50 134.63 L100.60 136.31 L99.70 142.66 L98.80 154.50 L97.90 148.76 L97.00 146.72 L96.10 142.01 L95.20 140.73 L94.30 137.25 L93.40 135.64 L92.50 133.57 L91.60 136.46 L90.70 138.68 L89.80 143.50 L88.90 137.34 L88.00 133.86 L87.10 139.41 L86.20 141.59 L85.30 145.50 L84.40 149.72 L83.50 157.08 L82.60 168.55 L81.70 177.50 L80.80 170.94 L79.90 166.31 L79.00 162.33 L78.10 173.80 L77.20 162.30 L76.30 163.45 L75.40 165.92 L74.50 168.63 L73.60 170.53 L72.70 174.73 L71.80 179.75 L70.90 187.10 L70.00 182.24 L69.10 176.77 L68.20 170.72 L67.30 171.96 L66.40 161.16 L65.50 158.97 L64.60 163.01 L63.70 155.23 L62.80 153.19 L61.90 146.11 L61.00 142.35 L60.10 138.22 L59.20 141.50 L58.30 131.48 L57.40 128.75 L56.50 127.34 L55.60 126.98 L54.70 126.81 L53.80 126.70 L52.90 126.76 L52.00 127.55 L51.10 128.24 L50.20 128.75 L49.30 130.01 L48.40 127.98 L47.50 127.15 L46.60 126.27 L45.70 125.76 L44.80 127.68 L43.90 126.96 L43.00 129.65 L42.10 127.52 L41.20 126.89 L40.30 127.36 L39.40 125.51 L38.50 126.07 L37.60 124.92 L36.70 125.22 L35.80 124.42 L34.90 124.53 L34.00 123.83 L33.10 123.64 L32.20 123.47 L31.30 123.33 L30.40 123.19 L29.50 123.37 L28.60 124.33 L27.70 124.58 L26.80 124.20 L25.90 123.61 L25.00 123.17 L24.10 122.85 L23.20 122.77 L22.30 122.73 L21.40 122.86 L20.50 122.63 L19.60 122.81 L18.70 122.51 L17.80 122.45 L16.90 122.43 L16.00 122.37 L15.10 122.37 L14.20 122.36 L13.30 122.49 L12.40 122.31 L11.50 122.44 L10.60 122.28 L9.70 122.42 L8.80 122.25 L7.90 122.25 L7.00 122.32Z" fill="#6dd92a" stroke="#6dd92a" stroke-width="0.6" stroke-linejoin="round"/><rect x="0.75" y="0.75" width="695.0" height="239.3" fill="none" stroke="#4a4e58" stroke-width="1.5"/></svg>
<div class="abs" style="left:856.8px;top:370.5px;width:1.5px;height:6.5px;background:#4f535d"></div>
<div class="abs" style="left:919.5px;top:370.5px;width:1.5px;height:6.5px;background:#4f535d"></div>
<div class="abs" style="left:982.8px;top:370.5px;width:1.5px;height:6.5px;background:#4f535d"></div>
<div class="abs" style="left:1046px;top:370.5px;width:1.5px;height:6.5px;background:#4f535d"></div>
<div class="abs" style="left:1108.3px;top:370.5px;width:1.5px;height:6.5px;background:#4f535d"></div>
<div class="abs" style="left:1169.4px;top:370.5px;width:1.5px;height:6.5px;background:#4f535d"></div>
<div class="abs" style="left:1232.6px;top:370.5px;width:1.5px;height:6.5px;background:#4f535d"></div>
<div class="abs" style="left:1296.3px;top:370.5px;width:1.5px;height:6.5px;background:#4f535d"></div>
<div class="abs" style="left:1359.5px;top:370.5px;width:1.5px;height:6.5px;background:#4f535d"></div>
<div class="abs" style="left:1422.3px;top:370.5px;width:1.5px;height:6.5px;background:#4f535d"></div>
<div class="abs" style="left:805.2px;top:370px;width:1.5px;height:6px;background:#8b9098;transform:skewX(15deg)"></div>
<div class="abs sans" style="left:793px;top:374px;font-size:16.5px;line-height:20px;color:#ececee;-webkit-text-stroke:0.4px #ececee">0</div>
<div class="abs sans" style="left:1105.5px;top:377px;font-size:20.4px;line-height:28px;letter-spacing:0.5px;color:#f3f4f5;white-space:pre;-webkit-text-stroke:0.5px #f3f4f5">Time</div>
<div class="abs sans" style="left:711px;top:247px;width:120px;height:26px;text-align:center;font-size:20.6px;line-height:26px;color:#f0f1f2;white-space:pre;transform:rotate(-90deg);transform-origin:50% 50%;-webkit-text-stroke:0.3px #f0f1f2">Amplitude</div>
<div class="abs sans" style="left:787.5px;top:460px;font-size:26px;line-height:34px;font-weight:bold;color:#7cc472;white-space:pre;transform-origin:0 50%;transform:scaleX(0.975)">Transcription Output:</div>
<div class="abs" style="left:785.2px;top:521px;width:710.6px;height:181.3px;border:2px solid #323641;background:#171a21"></div>
<div class="abs" style="left:808.2px;top:546px;font-size:23.65px;line-height:36px;height:36px;color:#f6f7f8;white-space:pre;-webkit-text-stroke:0.85px #f6f7f8">Welcome to the world of artificial</div>
<div class="abs" style="left:808.2px;top:590px;font-size:23.65px;line-height:36px;height:36px;color:#f6f7f8;white-space:pre;-webkit-text-stroke:0.85px #f6f7f8">intelligence. It's geing to be an amaz</div>
<div class="abs" style="left:808.2px;top:634px;font-size:23.65px;line-height:36px;height:36px;color:#f6f7f8;white-space:pre;-webkit-text-stroke:0.85px #f6f7f8">ing journey!</div>
<div class="abs" style="left:951px;top:620.5px;width:8px;height:2.5px;border:1px solid #c9cbcf;border-radius:50%;transform:rotate(6deg)"></div>
</div></body></html>
